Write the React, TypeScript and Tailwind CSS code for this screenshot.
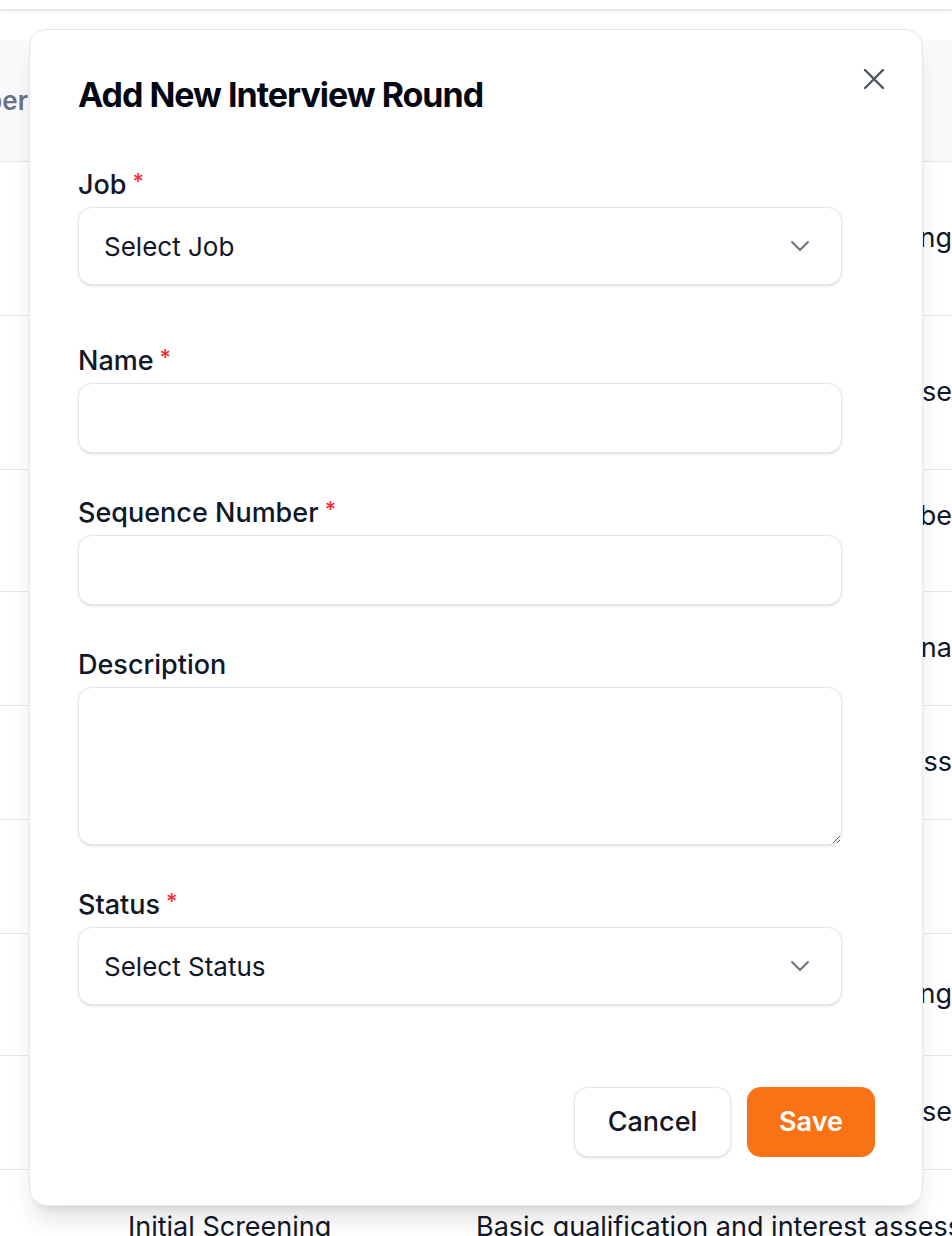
import React from 'react';

const rows = [
  { h: 'h-[154px]', align: 'items-center', name: 'Phone Screen', text: 'Initial call to review experience and motivation for joining', right: true },
  { h: 'h-[154px]', align: 'items-center', name: 'Technical Round', text: 'Hands-on coding exercise assessing core technical expertise', right: true },
  { h: 'h-[122px]', align: 'items-start pt-[26px]', name: 'Team Fit', text: 'Discussion of how values and work style would be', right: true },
  { h: 'h-[114px]', align: 'items-center', name: 'Leadership', text: 'Final discussion with regional leadership in Vienna', right: true },
  { h: 'h-[114px]', align: 'items-center', name: 'Assignment', text: 'Take-home assignment the panel will review and assess', right: true },
  { h: 'h-[114px]', align: 'items-center', name: 'HR Round', text: 'Culture and benefits', right: false },
  { h: 'h-[122px]', align: 'items-center', name: 'Offer', text: 'Compensation and offer discussion, including onboarding', right: true },
  { h: 'h-[114px]', align: 'items-center', name: 'System Design', text: 'Technical interview to evaluate depth of expertise', right: true },
];

function Chevron() {
  return (
    <svg width="20" height="12" viewBox="0 0 20 12" fill="none" className="text-gray-500">
      <path d="M2 2l8 8 8-8" stroke="currentColor" strokeWidth="2" strokeLinecap="round" strokeLinejoin="round" />
    </svg>
  );
}

function Label({ text, required }: { text: string; required?: boolean }) {
  return (
    <label className="flex items-start text-[27px] leading-[32px] font-medium text-gray-900 mb-[6px]">
      {text}
      {required && <span className="ml-[6px] text-[22px] leading-[24px] text-red-500">*</span>}
    </label>
  );
}

function SelectBox({ placeholder }: { placeholder: string }) {
  return (
    <div className="h-[78px] w-[764px] rounded-[14px] border border-gray-200 bg-white shadow-sm flex items-center justify-between pl-[25px] pr-[31px]">
      <span className="text-[26px] text-gray-900">{placeholder}</span>
      <Chevron />
    </div>
  );
}

export default function App() {
  return (
    <div
      className="relative w-full h-[1236px] overflow-hidden bg-white"
      style={{ fontFamily: 'Inter, "Noto Sans", sans-serif' }}
    >
      {/* Top bar */}
      <div className="h-[10px] bg-white border-b border-gray-200 shadow-sm" />

      {/* Background table */}
      <div className="mt-[30px]">
        <div className="h-[122px] bg-gray-50 border-b border-gray-200 flex items-center">
          <div className="w-[28px] flex justify-end">
            <span className="whitespace-nowrap text-[26px] font-semibold text-gray-500">Number</span>
          </div>
        </div>
        {rows.map((r, i) => (
          <div key={i} className={`${r.h} ${r.align} flex border-b border-gray-200 text-[27px] text-gray-900`}>
            <div className="w-[128px]" />
            <div className="w-[348px] whitespace-nowrap">{r.name}</div>
            <div className={`w-[476px] flex ${r.right ? 'justify-end' : 'justify-start'} overflow-hidden whitespace-nowrap`}>{r.text}</div>
          </div>
        ))}
        <div className="h-[114px] flex items-center text-[27px] text-gray-900">
          <div className="w-[128px]" />
          <div className="w-[348px] whitespace-nowrap">Initial Screening</div>
          <div className="w-[476px] overflow-hidden whitespace-nowrap">Basic qualification and interest assessment</div>
        </div>
      </div>

      {/* Modal */}
      <div className="absolute left-[29px] top-[29px] w-[894px] h-[1177px] rounded-[18px] border border-gray-200 bg-white shadow-xl pl-[48px] pr-[47px] pt-[45px]">
        <button className="absolute top-[38px] right-[37px] text-gray-600">
          <svg width="22" height="22" viewBox="0 0 22 22" fill="none">
            <path d="M2 2l18 18M20 2L2 20" stroke="currentColor" strokeWidth="2.4" strokeLinecap="round" />
          </svg>
        </button>

        <h2 className="text-[34px] leading-[40px] font-bold tracking-[-0.03em] text-gray-950">Add New Interview Round</h2>

        <div className="mt-[54px]">
          <Label text="Job" required />
          <SelectBox placeholder="Select Job" />
        </div>

        <div className="mt-[60px]">
          <Label text="Name" required />
          <input className="h-[70px] w-[764px] rounded-[14px] border border-gray-200 bg-white shadow-sm px-[25px] text-[26px] outline-none" />
        </div>

        <div className="mt-[44px]">
          <Label text="Sequence Number" required />
          <input className="h-[70px] w-[764px] rounded-[14px] border border-gray-200 bg-white shadow-sm px-[25px] text-[26px] outline-none" />
        </div>

        <div className="mt-[44px]">
          <Label text="Description" />
          <textarea className="block h-[158px] w-[764px] rounded-[14px] border border-gray-200 bg-white shadow-sm px-[25px] py-[16px] text-[26px] outline-none" />
        </div>

        <div className="mt-[44px]">
          <Label text="Status" required />
          <SelectBox placeholder="Select Status" />
        </div>

        <div className="mt-[82px] flex justify-end gap-[16px]">
          <button className="h-[70px] w-[157px] rounded-[14px] border border-gray-200 bg-white shadow-sm text-[27px] font-medium text-gray-900">
            Cancel
          </button>
          <button className="h-[70px] w-[128px] rounded-[14px] bg-[#f97316] text-[27px] font-semibold text-white">
            Save
          </button>
        </div>
      </div>
    </div>
  );
}
